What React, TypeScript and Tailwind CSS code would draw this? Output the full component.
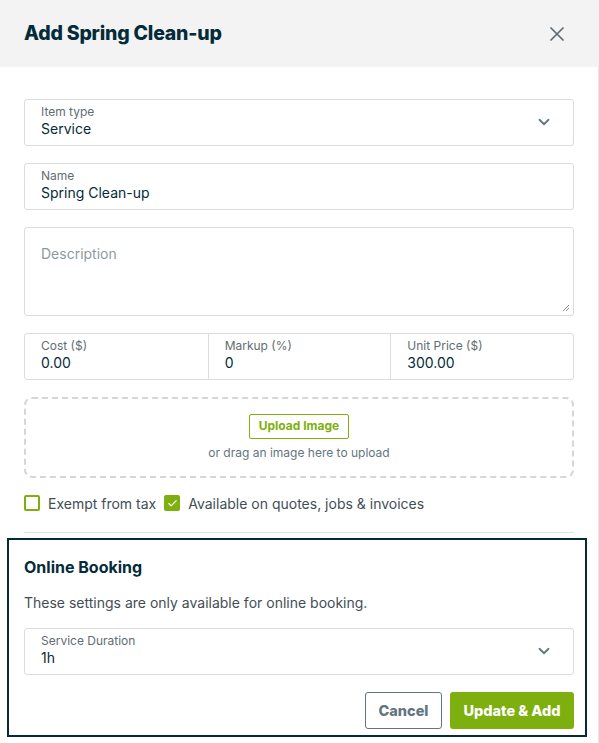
import { ChevronDown, Check } from 'lucide-react';

const ink = 'text-[#032b3a]';

function Field({ label, value, select }: { label: string; value: string; select?: boolean }) {
  return (
    <div className="flex h-[47px] items-start rounded-[3px] border border-[#dcdcdc] bg-white pl-4 pr-5 pt-[4px]">
      <div className="flex-1">
        <div className="text-[12px] leading-[15px] text-[#5f6d73]">{label}</div>
        <div className={`text-[14px] leading-[19px] ${ink}`}>{value}</div>
      </div>
      {select && <ChevronDown size={18} strokeWidth={2.4} className="mt-[9px] text-[#637680]" />}
    </div>
  );
}

function Box({ checked }: { checked?: boolean }) {
  return checked ? (
    <span className="grid h-4 w-4 place-items-center rounded-[2px] bg-[#7db00e]">
      <Check size={11} strokeWidth={2.5} className="text-white" />
    </span>
  ) : (
    <span className="h-4 w-4 rounded-[2px] border-2 border-[#7db00e] bg-white" />
  );
}

export default function App() {
  return (
    <div className="h-[743px] w-[599px] overflow-hidden bg-white" style={{ fontFamily: 'Inter, "Noto Sans", sans-serif' }}>
      <div className="flex h-[67px] items-center justify-between bg-[#f3f3f3] pl-6 pr-[35px]">
        <h2 className={`text-[19.5px] font-extrabold tracking-[-0.2px] ${ink}`}>Add Spring Clean-up</h2>
        <svg width="14" height="14" viewBox="0 0 14 14">
          <path d="M1 1L13 13M13 1L1 13" stroke="#5c6a72" strokeWidth="1.7" strokeLinecap="round" />
        </svg>
      </div>

      <div className="h-[676px] border-r border-[#e4e4e4] pt-8">
        <div className="px-6">
          <Field label="Item type" value="Service" select />
          <div className="mt-[17px]">
            <Field label="Name" value="Spring Clean-up" />
          </div>
          <div className="relative mt-[17px] h-[89px] rounded-[3px] border border-[#dcdcdc] px-4 pt-[13px]">
            <span className="text-[14px] text-[#8e9ba1]">Description</span>
            <svg className="absolute bottom-[3px] right-[3px]" width="8" height="8" viewBox="0 0 8 8">
              <path d="M7 1L1 7M7 4L4 7" stroke="#8b8b8b" strokeWidth="1" />
            </svg>
          </div>
          <div className="mt-[17px] grid h-[47px] grid-cols-3 rounded-[3px] border border-[#dcdcdc]">
            {[
              ['Cost ($)', '0.00'],
              ['Markup (%)', '0'],
              ['Unit Price ($)', '300.00'],
            ].map(([l, v], i) => (
              <div key={l} className={`pl-4 pt-[4px] ${i > 0 ? 'border-l border-[#dcdcdc]' : ''}`}>
                <div className="text-[12px] leading-[15px] text-[#5f6d73]">{l}</div>
                <div className={`text-[14px] leading-[19px] ${ink}`}>{v}</div>
              </div>
            ))}
          </div>

          <div className="mt-[17px] flex h-[81px] flex-col items-center justify-center rounded-[8px] border-2 border-dashed border-[#d6d6d6]">
            <button className="h-[25px] rounded-[2px] border border-[#7db00e] px-[9px] text-[12px] font-bold text-[#7db00e]">
              Upload Image
            </button>
            <div className="mt-[5px] text-[12px] text-[#637680]">or drag an image here to upload</div>
          </div>

          <div className="mt-[15px] flex h-5 items-center text-[14px] text-[#424e56]">
            <Box />
            <span className="ml-2 mr-2">Exempt from tax</span>
            <Box checked />
            <span className="ml-2">Available on quotes, jobs &amp; invoices</span>
          </div>

          <div className="mt-[19px] border-t border-[#e1e1e1]" />
        </div>

        <div className="ml-[7px] mt-[5px] w-[580px] border-2 border-[#032b3a] pb-[6px] pl-[15px] pr-[11px] pt-[17px]">
          <h3 className={`text-[16px] font-bold leading-[20px] ${ink}`}>Online Booking</h3>
          <p className="mt-4 text-[14px] leading-[20px] text-[#424e56]">These settings are only available for online booking.</p>
          <div className="mt-[15px]">
            <Field label="Service Duration" value="1h" select />
          </div>
          <div className="mt-[17px] flex justify-end gap-2">
            <button className="h-[37px] w-[77px] rounded-[3px] border border-[#637680] text-[14.5px] font-extrabold text-[#637680]">
              Cancel
            </button>
            <button className="h-[37px] w-[124px] rounded-[3px] bg-[#7db00e] text-[14.5px] font-extrabold text-white">
              Update &amp; Add
            </button>
          </div>
        </div>
      </div>
    </div>
  );
}
